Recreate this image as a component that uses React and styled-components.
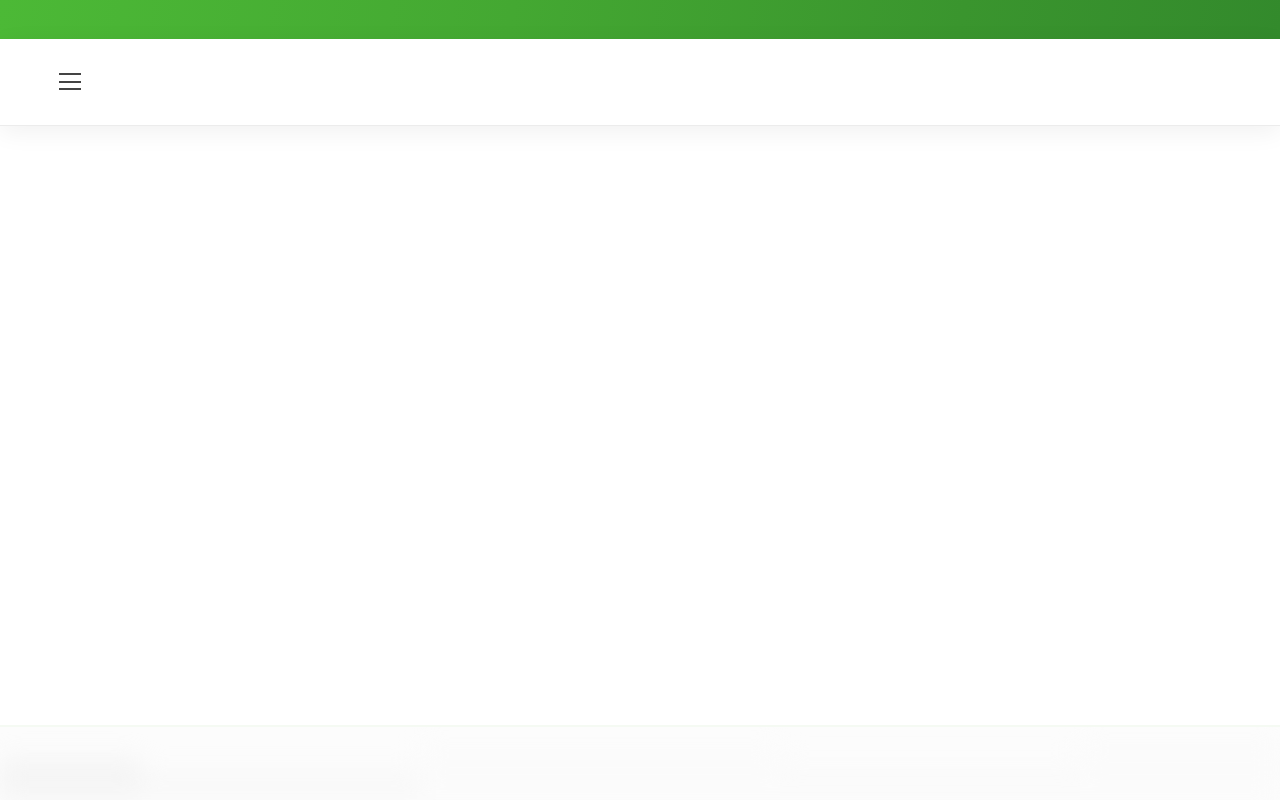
import React from "react";
import styled, { createGlobalStyle } from "styled-components";

const Global = createGlobalStyle`
  html, body { margin: 0; padding: 0; background: #fff; }
  body { font-family: "Open Sans", "Liberation Sans", sans-serif; overflow: hidden; }
  #root { min-height: 800px; }
`;

const Page = styled.div`
  display: flex;
  flex-direction: column;
  height: 800px;
  position: relative;
`;

const TopStrip = styled.div`
  height: 39px;
  background: linear-gradient(100deg, #4cb936 0%, #44a832 40%, #3a952e 75%, #338a2c 100%);
`;

const Header = styled.header`
  height: 86px;
  display: flex;
  align-items: center;
  padding: 0 59px;
  background: #fff;
  border-bottom: 1px solid #ececec;
  box-shadow: 0 6px 24px rgba(0, 0, 0, 0.06);
  position: relative;
  z-index: 1;
`;

const MenuButton = styled.button`
  width: 22px;
  height: 20px;
  padding: 0;
  border: 0;
  background: transparent;
  display: flex;
  flex-direction: column;
  justify-content: center;
  gap: 5.5px;
  cursor: pointer;
  margin-top: -1px;
`;

const Bar = styled.span`
  display: block;
  height: 2px;
  width: 22px;
  background: #444;
`;

const Main = styled.main`
  flex: 1;
`;

const BottomDock = styled.div`
  position: absolute;
  left: 0;
  right: 0;
  bottom: 0;
  height: 75px;
  box-sizing: border-box;
  background: #fcfcfc;
  border-top: 2px solid #f5faf3;
  overflow: hidden;
`;

const Ghosts = styled.div`
  display: grid;
  grid-template-columns: 140px 280px 360px 300px 200px;
  height: 100%;
  filter: blur(12px);
  opacity: 0.45;
`;

const Ghost = styled.div`
  background: ${(p) => p.$c};
  margin-top: ${(p) => p.$t}px;
`;

export default function App() {
  return (
    <Page>
      <Global />
      <TopStrip />
      <Header>
        <MenuButton aria-label="Menu">
          <Bar />
          <Bar />
          <Bar />
        </MenuButton>
      </Header>
      <Main />
      <BottomDock>
        <Ghosts>
          <Ghost $c="#ececec" $t={30} />
          <Ghost $c="#f4f4f4" $t={45} />
          <Ghost $c="#fafafa" $t={15} />
          <Ghost $c="#f9f9f9" $t={35} />
          <Ghost $c="#fafafa" $t={10} />
        </Ghosts>
      </BottomDock>
    </Page>
  );
}
